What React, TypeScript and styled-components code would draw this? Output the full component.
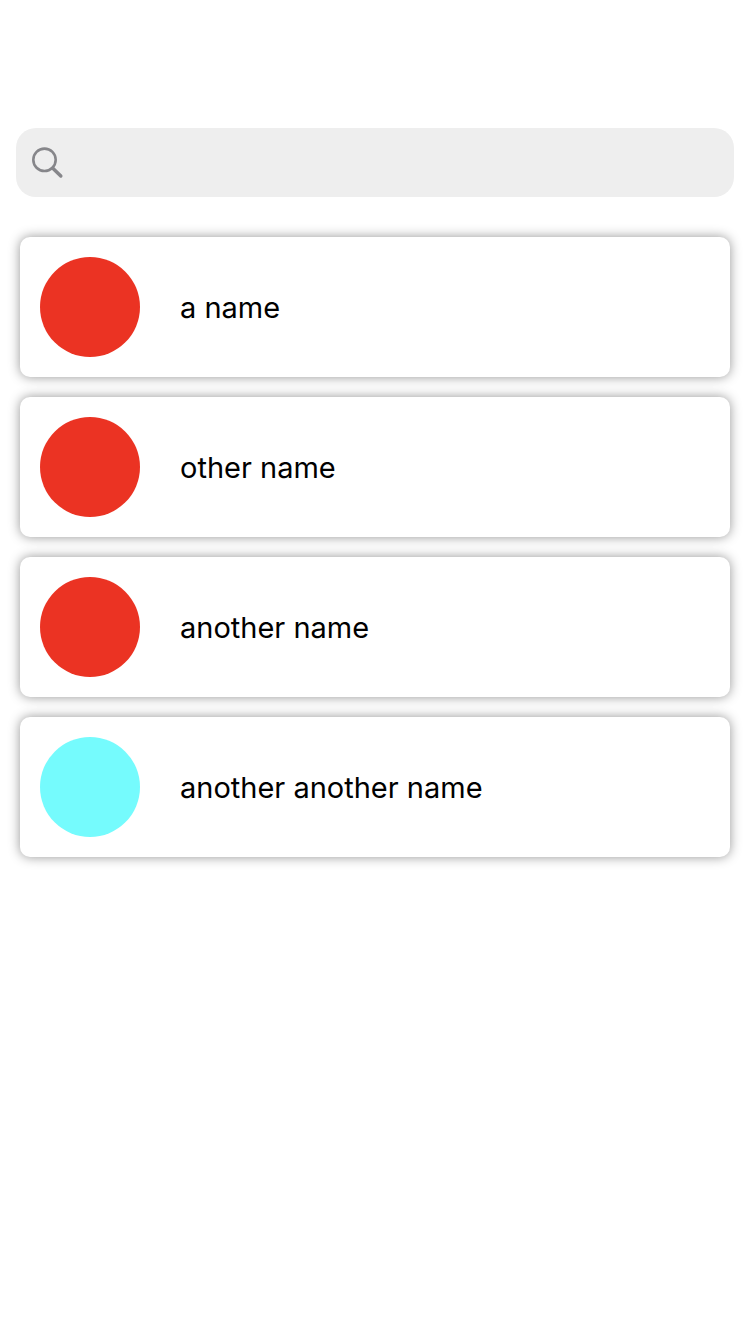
import React from 'react';
import styled, { createGlobalStyle } from 'styled-components';

const GlobalStyle = createGlobalStyle`
  * { box-sizing: border-box; }
  body {
    margin: 0;
    background: #fff;
    font-family: Inter, 'Liberation Sans', sans-serif;
  }
`;

const Screen = styled.main`
  min-height: 1334px;
  padding-top: 128px;
  background: #fff;
`;

const SearchBar = styled.label`
  display: flex;
  align-items: center;
  height: 69px;
  margin: 0 16px;
  padding: 0 14px;
  border-radius: 20px;
  background: #eeeeee;
`;

const SearchIcon = styled.svg`
  flex: none;
  width: 36px;
  height: 36px;
`;

const SearchInput = styled.input`
  flex: 1;
  min-width: 0;
  border: 0;
  outline: 0;
  background: transparent;
  font: inherit;
  font-size: 30px;
`;

const List = styled.ul`
  display: flex;
  flex-direction: column;
  gap: 20px;
  margin: 40px 20px 0;
  padding: 0;
  list-style: none;
`;

const Card = styled.li`
  display: flex;
  align-items: center;
  gap: 40px;
  height: 140px;
  padding: 20px;
  border-radius: 10px;
  background: #fff;
  box-shadow: 0 0 12px rgba(0, 0, 0, 0.42);
`;

const Avatar = styled.span<{ $color: string }>`
  flex: none;
  width: 100px;
  height: 100px;
  border-radius: 50%;
  background: ${({ $color }) => $color};
`;

const Name = styled.span`
  padding-top: 2px;
  color: #000;
  font-size: 29px;
  line-height: 36px;
`;

const contacts = [
  { name: 'a name', color: '#eb3323' },
  { name: 'other name', color: '#eb3323' },
  { name: 'another name', color: '#eb3323' },
  { name: 'another another name', color: '#75fbfd' },
];

export default function App() {
  return (
    <>
      <GlobalStyle />
      <Screen>
        <SearchBar>
          <SearchIcon viewBox="0 0 36 36" fill="none" stroke="#86868a" strokeLinecap="round">
            <circle cx="14.5" cy="14.8" r="11.2" strokeWidth="2.6" />
            <path d="M22.8 23.2 30.8 31" strokeWidth="3.5" />
          </SearchIcon>
          <SearchInput aria-label="Search" />
        </SearchBar>
        <List>
          {contacts.map(({ name, color }) => (
            <Card key={name}>
              <Avatar $color={color} />
              <Name>{name}</Name>
            </Card>
          ))}
        </List>
      </Screen>
    </>
  );
}
